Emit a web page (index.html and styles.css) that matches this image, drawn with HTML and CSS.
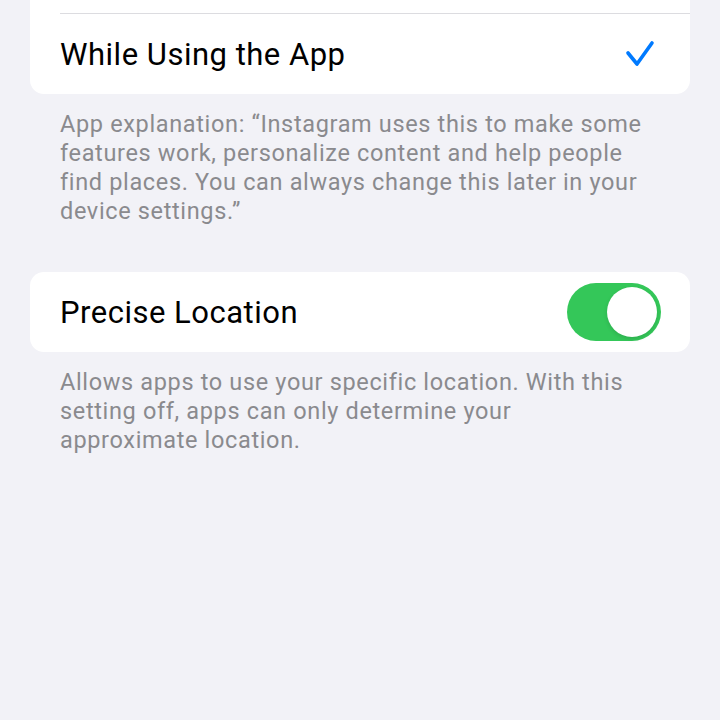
FILE: index.html
```html
<!DOCTYPE html>
<html lang="en">
<head>
  <meta charset="UTF-8" />
  <meta name="viewport" content="width=device-width, initial-scale=1.0"/>
  <title>Location</title>
  <link rel="stylesheet" href="styles.css">
</head>
<body>
  <main class="page">
    <div class="group">
      <div class="row"></div>
      <div class="row">
        <span class="label">While Using the App</span>
        <svg class="check" width="30" height="28" viewBox="0 0 30 28">
          <polyline points="3,13 12,24 27,3" fill="none" stroke="#007aff" stroke-width="3.6" stroke-linecap="round" stroke-linejoin="round"/>
        </svg>
      </div>
    </div>
    <p class="footer">App explanation: “Instagram uses this to make some features work, personalize content and help people find places. You can always change this later in your device settings.”</p>

    <div class="group group-spaced">
      <div class="row">
        <span class="label">Precise Location</span>
        <span class="toggle on"><span class="knob"></span></span>
      </div>
    </div>
    <p class="footer">Allows apps to use your specific location. With this setting off, apps can only determine your approximate location.</p>
  </main>
</body>
</html>
```

FILE: styles.css
```css
body { margin: 0; background: #f2f2f7; font-family: Roboto, "Noto Sans", sans-serif; color: #000; overflow: hidden; }
.page { padding: 0 30px; margin-top: -67px; }
.group { background: #fff; border-radius: 14px; }
.group-spaced { margin-top: 46px; }
.row { height: 80px; display: flex; align-items: center; justify-content: space-between; margin-left: 30px; padding-right: 30px; }
.row + .row { border-top: 1px solid #dcdce0; }
.label { font-size: 31px; letter-spacing: 0.5px; }
.check { margin-right: 5px; }
.footer { margin: 0; padding: 16px 40px 0 30px; font-size: 23.5px; line-height: 29px; letter-spacing: 0.65px; color: #8a8a8e; }
.toggle { width: 94px; height: 58px; border-radius: 29px; background: #e9e9eb; position: relative; margin-right: -1px; }
.toggle.on { background: #34c759; }
.knob { position: absolute; top: 4px; right: 4px; width: 50px; height: 50px; border-radius: 50%; background: #fff; box-shadow: 0 2px 4px rgba(0,0,0,0.12); }
```
